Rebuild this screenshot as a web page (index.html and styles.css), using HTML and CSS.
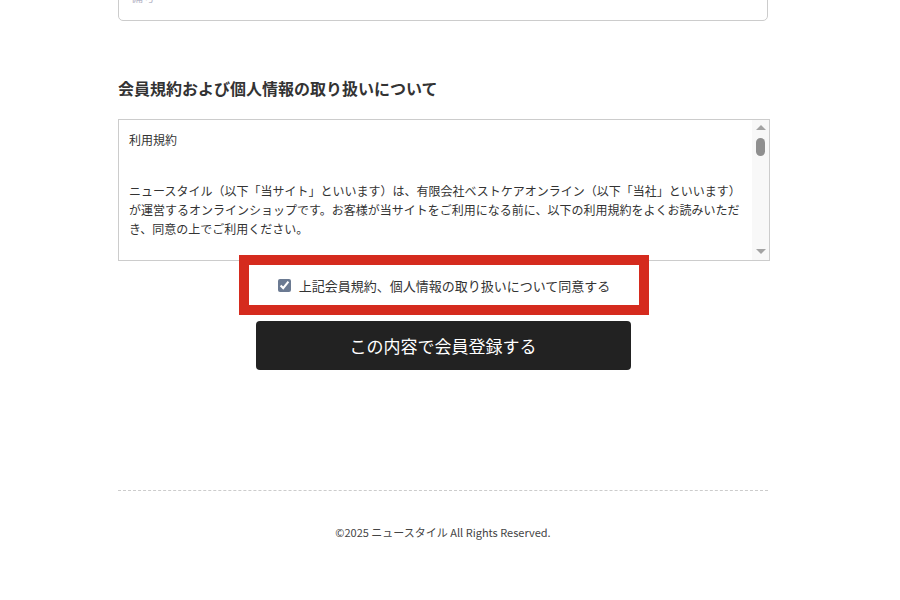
FILE: index.html
```html
<!DOCTYPE html>
<html lang="ja">
<head>
<meta charset="utf-8">
<title>会員登録</title>
<link rel="stylesheet" href="styles.css">
</head>
<body>
<main class="page">
  <div class="prev-field"><span class="placeholder">備考</span></div>

  <h2 class="section-title">会員規約および個人情報の取り扱いについて</h2>

  <div class="terms">
    <div class="terms-body">
      <p class="terms-title">利用規約</p>
      <p>ニュースタイル（以下「当サイト」といいます）は、有限会社ベストケアオンライン（以下「当社」といいます）が運営するオンラインショップです。お客様が当サイトをご利用になる前に、以下の利用規約をよくお読みいただき、同意の上でご利用ください。</p>
      <p>第1条（適用）<br>本規約は、当サイトの利用に関する当社とお客様との間の一切の関係に適用されるものとします。</p>
      <p>第2条（会員登録）<br>登録希望者が当社の定める方法によって会員登録を申請し、当社がこれを承認することによって、会員登録が完了するものとします。</p>
      <p>第3条（会員情報の管理）<br>会員は、自己の責任において、ログインIDおよびパスワードを適切に管理するものとします。</p>
    </div>
    <div class="scrollbar" aria-hidden="true">
      <span class="arrow arrow-up"></span>
      <span class="track"><span class="thumb"></span></span>
      <span class="arrow arrow-down"></span>
    </div>
  </div>

  <div class="agree">
    <label class="agree-label"><input type="checkbox" class="agree-check" checked>上記会員規約、個人情報の取り扱いについて同意する</label>
  </div>

  <button type="button" class="submit">この内容で会員登録する</button>

  <footer class="footer">
    <p class="copyright">©2025 ニュースタイル All Rights Reserved.</p>
  </footer>
</main>
</body>
</html>
```

FILE: styles.css
```css
html, body {
  margin: 0;
  padding: 0;
  background: #ffffff;
}

body {
  font-family: "Noto Sans CJK JP", "Noto Sans", sans-serif;
  color: #333333;
  overflow: hidden;
}

.page {
  width: 650px;
  margin-left: 118px;
}

.prev-field {
  box-sizing: border-box;
  height: 61px;
  margin-top: -40px;
  border: 1px solid #cccccc;
  border-radius: 5px;
  padding: 26px 12px 0;
  font-size: 12px;
  line-height: 19px;
}

.placeholder {
  color: #b8b8c8;
}

.section-title {
  margin: 55px 0 0;
  font-size: 16px;
  line-height: 24px;
  font-weight: bold;
  color: #333333;
}

.terms {
  box-sizing: border-box;
  width: 652px;
  height: 142px;
  margin-top: 19px;
  border: 1px solid #cccccc;
  display: flex;
}

.terms-body {
  flex: 1;
  overflow: hidden;
  padding: 10px 10px 0;
  font-size: 12px;
  line-height: 19px;
  color: #333333;
}

.terms-body p {
  margin: 0 0 19px;
}

.terms-body .terms-title {
  margin-bottom: 32px;
}

.scrollbar {
  width: 17px;
  flex: none;
  background: #f8f8f8;
  display: flex;
  flex-direction: column;
  align-items: center;
}

.arrow {
  width: 0;
  height: 0;
  border-left: 5px solid transparent;
  border-right: 5px solid transparent;
}

.arrow-up {
  margin-top: 5px;
  border-bottom: 5px solid #a3a3a3;
}

.arrow-down {
  margin-bottom: 6px;
  border-top: 5px solid #a3a3a3;
}

.track {
  flex: 1;
  display: flex;
  flex-direction: column;
  align-items: center;
}

.thumb {
  width: 9px;
  height: 18px;
  margin-top: 8px;
  border-radius: 5px;
  background: #8f8f8f;
}

.agree {
  box-sizing: border-box;
  width: 390px;
  height: 40px;
  margin: 4px auto 0;
  outline: 10px solid #d52b1e;
  display: flex;
  align-items: center;
  justify-content: center;
  position: relative;
  left: 1px;
}

.agree-label {
  display: flex;
  align-items: center;
  gap: 8px;
  font-size: 13px;
  color: #333333;
}

.agree-check {
  width: 13px;
  height: 13px;
  margin: 0;
  accent-color: #6b7a92;
}

.submit {
  display: block;
  width: 375px;
  height: 49px;
  margin: 16px auto 0;
  border: none;
  border-radius: 4px;
  background: #222222;
  color: #ffffff;
  font-family: "Noto Sans CJK JP", "Noto Sans", sans-serif;
  font-size: 17px;
  cursor: pointer;
}

.footer {
  margin-top: 120px;
  border-top: 1px dashed #cccccc;
  padding-top: 33px;
}

.copyright {
  margin: 0;
  text-align: center;
  font-size: 11px;
  line-height: 16px;
  color: #444444;
}
```
